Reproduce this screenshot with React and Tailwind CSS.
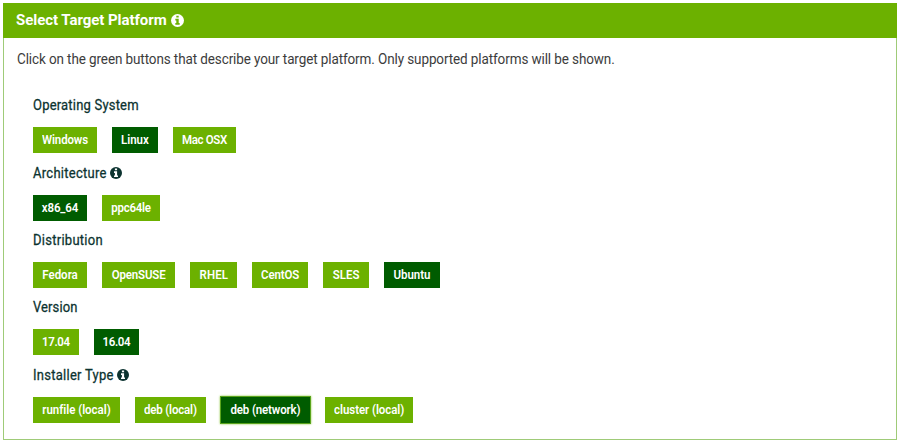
function InfoIcon({ className }) {
  return (
    <svg viewBox="0 0 12 12" className={className} aria-hidden="true">
      <circle cx="6" cy="6" r="6" fill="currentColor" />
      <path
        d="M4.9 1.5h2.2v1.8H4.9zM4 4.3h3.1v4.1H8V10H4V8.4h.9V5.9H4z"
        className="fill-(--dot)"
      />
    </svg>
  );
}

const groups = [
  {
    title: "Operating System",
    row: "h-[68px]",
    track: "tracking-[0.2px]",
    options: [
      { label: "Windows", size: "w-[64px] tracking-[-0.15px]" },
      { label: "Linux", size: "w-[46px]", on: true },
      { label: "Mac OSX", size: "w-[63.5px] tracking-[-0.35px]" },
    ],
  },
  {
    title: "Architecture",
    row: "h-[67px]",
    track: "tracking-[0.27px]",
    info: true,
    options: [
      { label: "x86_64", size: "w-[54px] tracking-[-0.12px]", on: true },
      { label: "ppc64le", size: "w-[58.3px] tracking-[-0.25px]" },
    ],
  },
  {
    title: "Distribution",
    row: "h-[67px]",
    track: "tracking-[0.27px]",
    options: [
      { label: "Fedora", size: "w-[54px]" },
      { label: "OpenSUSE", size: "w-[73.5px] tracking-[-0.15px]" },
      { label: "RHEL", size: "w-[47px] tracking-[0.1px]" },
      { label: "CentOS", size: "w-[56px] tracking-[-0.13px]" },
      { label: "SLES", size: "w-[46px]" },
      { label: "Ubuntu", size: "w-[56px] tracking-[-0.07px]", on: true },
    ],
  },
  {
    title: "Version",
    row: "h-[68px]",
    track: "tracking-[0.1px]",
    options: [
      { label: "17.04", size: "w-[45.7px] tracking-[-0.4px]" },
      { label: "16.04", size: "w-[45.5px] tracking-[-0.4px]", on: true },
    ],
  },
  {
    title: "Installer Type",
    row: "h-[60px]",
    track: "tracking-[0.27px]",
    info: true,
    options: [
      { label: "runfile (local)", size: "w-[87px] tracking-[-0.03px]" },
      { label: "deb (local)", size: "w-[71px] tracking-[-0.18px]" },
      { label: "deb (network)", size: "w-[89.3px] tracking-[-0.13px]", on: true, focus: true },
      { label: "cluster (local)", size: "w-[88.4px] tracking-[-0.06px]" },
    ],
  },
];

function Option({ label, size, on, focus }) {
  return (
    <button
      className={`h-[26px] shrink-0 whitespace-nowrap text-center text-[11.5px] leading-[26px] font-semibold text-white ${size} ${
        on ? "bg-[#005c00]" : "bg-[#6cb100]"
      } ${focus ? "shadow-[0_0_0_1px_#5aa51c,0_0_2px_1px_#8cc63f]" : ""}`}
    >
      <span className="inline-block scale-y-108">{label}</span>
    </button>
  );
}

export default function App() {
  return (
    <div className="h-[443px] w-[900px] bg-white pt-[3px] pl-[3px] font-[Roboto,sans-serif]">
      <section className="h-[437px] w-[894px] border border-[#9fcb78]">
        <header className="-mx-px -mt-px flex h-[35px] items-center gap-[4px] bg-[#6cb100] pl-[13px] text-white">
          <h1 className="whitespace-nowrap text-[15px] font-bold tracking-[-0.05px]">Select Target Platform</h1>
          <InfoIcon className="h-[13px] w-[13px] [--dot:#6cb100]" />
        </header>
        <p className="mt-[11px] origin-center scale-y-104 pl-[13px] text-[13.5px] leading-[20px] whitespace-nowrap tracking-[-0.11px] text-[#3c3c3c]">
          Click on the green buttons that describe your target platform. Only supported platforms will be shown.
        </p>
        <div className="mt-[26px] pl-[29px]">
          {groups.map((g) => (
            <div key={g.title} className={g.row}>
              <div className="flex h-[20px] items-center gap-[3px] text-[#0c3330]">
                <h2 className={`scale-y-106 whitespace-nowrap pt-px text-[13px] font-normal [-webkit-text-stroke:0.25px] ${g.track}`}>{g.title}</h2>
                {g.info && <InfoIcon className="h-[12px] w-[12px] [--dot:#ffffff]" />}
              </div>
              <div className="mt-[12px] flex gap-[14.9px]">
                {g.options.map((o) => (
                  <Option key={o.label} {...o} />
                ))}
              </div>
            </div>
          ))}
        </div>
      </section>
    </div>
  );
}
